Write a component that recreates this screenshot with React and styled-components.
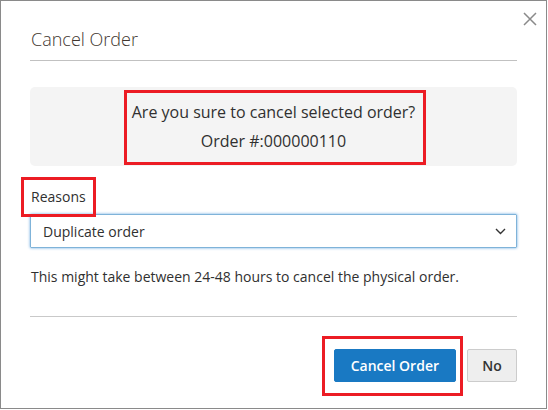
import React from "react";
import styled, { createGlobalStyle } from "styled-components";

const Global = createGlobalStyle`
  html, body { margin: 0; padding: 0; background: #ffffff; }
  body { font-family: "Open Sans", "Liberation Sans", sans-serif; color: #303030; }
  * { box-sizing: border-box; }
`;

const Modal = styled.div`
  position: relative;
  width: 547px;
  height: 409px;
  border: 1px solid #8a8a8a;
  background: #ffffff;
  padding: 0 29px;
  display: flex;
  flex-direction: column;
`;

const Header = styled.header`
  padding-top: 27px;
  padding-bottom: 9px;
  border-bottom: 1px solid #c1c1c1;
`;

const Title = styled.h1`
  margin: 0;
  font-size: 18px;
  font-weight: 300;
  line-height: 23px;
  color: #41362f;
  padding-left: 1px;
`;

const Close = styled.button`
  position: absolute;
  top: 10px;
  right: 8px;
  width: 16px;
  height: 16px;
  padding: 0;
  border: 0;
  background: transparent;
  display: flex;
  align-items: center;
  justify-content: center;
`;

const Message = styled.div`
  margin-top: 26px;
  background: #f4f4f4;
  border-radius: 5px;
  height: 79px;
  display: flex;
  align-items: center;
  justify-content: center;
`;

const Highlight = styled.div`
  position: relative;
  &::after {
    content: "";
    position: absolute;
    top: ${(p) => p.$t}px;
    right: ${(p) => p.$r}px;
    bottom: ${(p) => p.$b}px;
    left: ${(p) => p.$l}px;
    border: 3px solid #ec1c24;
    pointer-events: none;
  }
`;

const MessageText = styled.p`
  margin: 0;
  text-align: center;
  font-size: 16px;
  line-height: 29px;
  color: #303030;
`;

const Field = styled.div`
  margin-top: 19px;
  display: flex;
  flex-direction: column;
  align-items: flex-start;
  gap: 7px;
`;

const Label = styled.label`
  font-size: 14px;
  line-height: 18px;
  color: #303030;
  padding-left: 1px;
`;

const Select = styled.div`
  width: 100%;
  height: 34px;
  border: 1px solid #7fb3d9;
  box-shadow: 0 0 3px #68a8e0;
  border-radius: 1px;
  display: flex;
  align-items: center;
  justify-content: space-between;
  padding: 0 10px 0 12px;
  font-size: 14px;
  color: #303030;
`;

const Note = styled.p`
  margin: 19px 0 0;
  font-size: 14px;
  line-height: 20px;
  color: #303030;
  padding-left: 1px;
`;

const Footer = styled.footer`
  margin-top: 29px;
  border-top: 1px solid #c9c9c9;
  padding-top: 32px;
  display: flex;
  justify-content: flex-end;
  align-items: center;
  gap: 11px;
`;

const Button = styled.button`
  height: 33px;
  min-width: ${(p) => (p.$primary ? "auto" : "50px")};
  padding: 0 ${(p) => (p.$primary ? "16px" : "14px")};
  border-radius: 2px;
  font-family: "Open Sans", "Liberation Sans", sans-serif;
  font-size: 14px;
  font-weight: 600;
  border: 1px solid ${(p) => (p.$primary ? "#1979c3" : "#cccccc")};
  background: ${(p) => (p.$primary ? "#1979c3" : "#eeeeee")};
  color: ${(p) => (p.$primary ? "#ffffff" : "#333333")};
`;

export default function App() {
  return (
    <>
      <Global />
      <Modal>
        <Header>
          <Title>Cancel Order</Title>
        </Header>
        <Close aria-label="Close">
          <svg width="14" height="14" viewBox="0 0 14 14">
            <path d="M1 1 L13 13 M13 1 L1 13" stroke="#8a8a8a" strokeWidth="1.5" fill="none" />
          </svg>
        </Close>
        <Message>
          <Highlight $t={-8} $r={-11} $b={-9} $l={-8}>
            <MessageText>
              Are you sure to cancel selected order?
              <br />
              Order #:000000110
            </MessageText>
          </Highlight>
        </Message>
        <Field>
          <Highlight $t={-8} $r={-10} $b={-10} $l={-9}>
            <Label>Reasons</Label>
          </Highlight>
          <Select>
            <span>Duplicate order</span>
            <svg width="11" height="7" viewBox="0 0 11 7">
              <path d="M1 1 L5.5 5.5 L10 1" stroke="#333" strokeWidth="1.4" fill="none" />
            </svg>
          </Select>
        </Field>
        <Note>This might take between 24-48 hours to cancel the physical order.</Note>
        <Footer>
          <Highlight $t={-13} $r={-7} $b={-14} $l={-12}>
            <Button $primary>Cancel Order</Button>
          </Highlight>
          <Button>No</Button>
        </Footer>
      </Modal>
    </>
  );
}
